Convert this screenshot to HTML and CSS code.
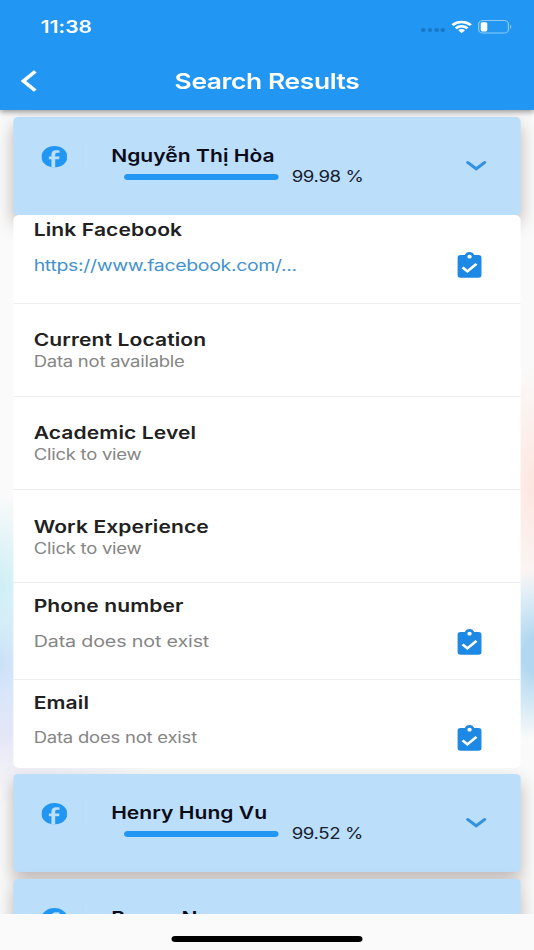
FILE: index.html
```html
<!DOCTYPE html>
<html lang="en">
<head>
<meta charset="utf-8">
<title>Search Results</title>
<link rel="stylesheet" href="styles.css">
</head>
<body>
<svg class="defs" width="0" height="0">
  <symbol id="facebook" viewBox="0 0 24 24"><ellipse cx="12" cy="12" rx="12" ry="12" fill="currentColor"/><path d="M9.200 24.200V14.700H6.900V11.700H9.200V9.400C9.200 6.400 10.900 4.700 13.500 4.700c1.300 0 3.200.2 3.200.2v2.700h-2c-1.500 0-2 .8-2 1.900v2.200h4l-.5 3h-3.500v9.500z" fill="#bbdefb"/></symbol>
  <symbol id="chevron" viewBox="0 0 17 10"><path d="M1.600 1.500 8.500 7.900 15.400 1.500" fill="none" stroke="currentColor" stroke-width="2.800" stroke-linecap="round"/></symbol>
  <symbol id="clipboard" viewBox="0 0 20 26"><path d="M2.800 3H6.200C6.700 1.200 8.200 0 10 0s3.300 1.200 3.800 3H17.200A2.800 3 0 0 1 20 6V22.800A2.800 3 0 0 1 17.200 25.800H2.800A2.800 3 0 0 1 0 22.800V6A2.800 3 0 0 1 2.800 3z" fill="currentColor"/><ellipse cx="10" cy="4.700" rx="1.800" ry="1.900" fill="#fff"/><path d="M4.300 15.400 8.200 19.400 15.700 11.900" fill="none" stroke="#fff" stroke-width="2.300"/></symbol>
</svg>
<div class="screen">
  <header class="appbar">
    <div class="status">
      <span class="time">11:38</span>
      <div class="indicators">
        <span class="dots"><i></i><i></i><i></i><i></i></span>
        <svg class="wifi" viewBox="0 0 18 14"><g fill="none" stroke="#fff" stroke-width="2.600"><path d="M1 5.200a11.300 11.300 0 0 1 16 0"/><path d="M3.900 8.600a7.200 7.200 0 0 1 10.200 0"/></g><path d="M6 10.800a4.300 4.300 0 0 1 6 0L9 13.800z" fill="#fff"/></svg>
        <svg class="battery" viewBox="0 0 28 14"><rect x=".5" y=".5" width="24.500" height="12.500" rx="3.600" fill="none" stroke="#fff" stroke-opacity=".5"/><rect x="2.200" y="2.200" width="5.400" height="9.200" rx="1.300" fill="#fff"/><path d="M26.400 4.700v4.200c1.200-.5 1.200-3.700 0-4.200z" fill="#fff" fill-opacity=".5"/></svg>
      </div>
    </div>
    <div class="nav">
      <svg class="back" viewBox="0 0 14 22"><path d="M12 1.400 2.200 11 12 20.600" fill="none" stroke="#fff" stroke-width="3.200"/></svg>
      <h1>Search Results</h1>
    </div>
  </header>

  <main class="results">
    <section class="card">
      <svg class="fb"><use href="#facebook"/></svg>
      <span class="rule"></span>
      <div class="person">
        <h2>Nguyễn Thị Hòa</h2>
        <div class="score"><span class="bar"></span><span>99.98 %</span></div>
      </div>
      <svg class="chev"><use href="#chevron"/></svg>
    </section>

    <section class="panel">
      <div class="row link">
        <div class="text"><h3>Link Facebook</h3><p class="url">https://www.facebook.com/...</p></div>
        <svg class="clip"><use href="#clipboard"/></svg>
      </div>
      <div class="row view"><div class="text"><h3>Current Location</h3><p>Data not available</p></div></div>
      <div class="row view"><div class="text"><h3>Academic Level</h3><p>Click to view</p></div></div>
      <div class="row view"><div class="text"><h3>Work Experience</h3><p>Click to view</p></div></div>
      <div class="row phone">
        <div class="text"><h3>Phone number</h3><p>Data does not exist</p></div>
        <svg class="clip"><use href="#clipboard"/></svg>
      </div>
      <div class="row email">
        <div class="text"><h3>Email</h3><p>Data does not exist</p></div>
        <svg class="clip"><use href="#clipboard"/></svg>
      </div>
    </section>

    <section class="card second">
      <svg class="fb"><use href="#facebook"/></svg>
      <span class="rule"></span>
      <div class="person">
        <h2>Henry Hung Vu</h2>
        <div class="score"><span class="bar"></span><span>99.52 %</span></div>
      </div>
      <svg class="chev"><use href="#chevron"/></svg>
    </section>

    <section class="card third">
      <svg class="fb"><use href="#facebook"/></svg>
      <span class="rule"></span>
      <div class="person"><h2>Brown Ng</h2></div>
    </section>
  </main>

  <footer class="home"><span></span></footer>
</div>
</body>
</html>
```
FILE: styles.css
```css
* { box-sizing: border-box; }
html, body { margin: 0; width: 534px; height: 950px; overflow: hidden; }
body { font-family: Inter, "Noto Sans", sans-serif; background: #fafafa; color: #212121; }
h1, h2, h3, p { margin: 0; font-weight: 400; white-space: nowrap; }
svg { display: block; flex: none; }
.defs { position: absolute; }

/* Laid out 439px wide, widened to fill the 534px viewport */
.screen {
  width: 439px;
  height: 950px;
  display: flex;
  flex-direction: column;
  transform: scaleX(1.2164);
  transform-origin: 0 0;
}

.appbar {
  flex: none;
  height: 110px;
  background: #2196f3;
  color: #fff;
  box-shadow: 0 2px 5px rgba(0, 0, 0, .4);
  position: relative;
  z-index: 2;
}
.status { height: 53px; padding: 0 18.500px 0 33.500px; display: flex; justify-content: space-between; align-items: center; }
.time { font-size: 17.500px; font-weight: 600; line-height: 20px; letter-spacing: -.1px; }
.indicators { display: flex; align-items: center; }
.dots { display: flex; gap: 1.500px; margin: 7px 4.500px 0 0; }
.dots i { width: 3.800px; height: 4px; border-radius: 2px; background: #1878c6; }
.wifi { width: 17px; height: 13.500px; margin-right: 5px; }
.battery { width: 28px; height: 14px; }
.nav { height: 55px; display: flex; align-items: center; position: relative; }
.back { width: 14px; height: 22px; margin-left: 16.700px; }
.nav h1 { flex: 1; margin-right: 30.700px; text-align: center; font-size: 21.700px; font-weight: 600; line-height: 28px; letter-spacing: -.32px; }

.results {
  flex: none;
  height: 804px;
  padding: 7px 10.700px 0;
  overflow: hidden;
  background:
    radial-gradient(ellipse 45px 85px at 439px 545px, #b1d8f0 0 20%, rgba(177, 216, 240, 0)),
    radial-gradient(ellipse 40px 120px at 439px 375px, #fde6e0, rgba(253, 230, 224, 0)),
    radial-gradient(ellipse 45px 90px at 0 475px, #cdeff5, rgba(205, 239, 245, 0)),
    radial-gradient(ellipse 45px 90px at 0 550px, #c8def8, rgba(200, 222, 248, 0)),
    radial-gradient(ellipse 120px 70px at 20px 625px, #e6e5f6, rgba(230, 229, 246, 0)),
    #fafafa;
}

.card {
  height: 97.500px;
  padding: 0 28.500px 0 23px;
  display: flex;
  align-items: flex-start;
  border-radius: 4px;
  background: #bbdefb;
  box-shadow: 0 8px 15px rgba(80, 55, 50, .34);
}
.card.second { margin-top: 6px; }
.card.third { margin-top: 7.500px; }
.fb { width: 21.500px; height: 21.500px; margin-top: 29px; color: #2196f3; }
.rule { width: 1px; height: 28px; margin: 26px 20.400px 0 14.800px; background: #c4e0fa; }
.person { flex: 1; padding-top: 28.800px; }
.person h2 { font-size: 17.300px; font-weight: 600; line-height: 20px; letter-spacing: .04px; color: #0b0b18; }
.score { display: flex; align-items: center; height: 20px; margin-top: 1.200px; padding-left: 10.500px; gap: 10.600px; font-size: 15.300px; letter-spacing: -.3px; color: #16202e; white-space: nowrap; }
.bar { width: 127.300px; height: 5.500px; border-radius: 3px; background: #2196f3; }
.chev { width: 17px; height: 10px; margin-top: 44px; color: #3292e0; }

.panel { height: 553px; margin-top: .5px; border-radius: 5px; background: #fff; position: relative; }
.row { display: flex; justify-content: space-between; align-items: flex-start; padding: 0 32.500px 0 17px; border-bottom: 1px solid #ededf0; }
.row h3 { font-size: 17.300px; font-weight: 600; line-height: 20px; letter-spacing: .1px; }
.row p { margin-top: 15.300px; font-size: 16.200px; line-height: 20px; letter-spacing: -.13px; color: #858585; }
.row .url { font-size: 16px; letter-spacing: -.27px; color: #4593cc; }
.clip { width: 20px; height: 26px; color: #1e88e5; }
.link { height: 88.500px; padding-top: 4.700px; }
.link .clip { margin-top: 32.800px; }
.view { height: 93.300px; padding-top: 26.500px; }
.row.view p { margin-top: 2px; font-size: 15.200px; letter-spacing: -.2px; }
.phone { height: 96.500px; padding-top: 12.800px; }
.phone .clip, .email .clip { margin-top: 32.500px; }
.email { height: 88px; padding-top: 12.800px; border-bottom: 0; }
.row.email p { margin-top: 15.700px; font-size: 15.200px; letter-spacing: -.18px; }

.home { flex: 1; display: flex; justify-content: center; padding-top: 22px; background: #fafafa; position: relative; }
.home span { width: 157px; height: 5.500px; border-radius: 3px; background: #000; }
```
